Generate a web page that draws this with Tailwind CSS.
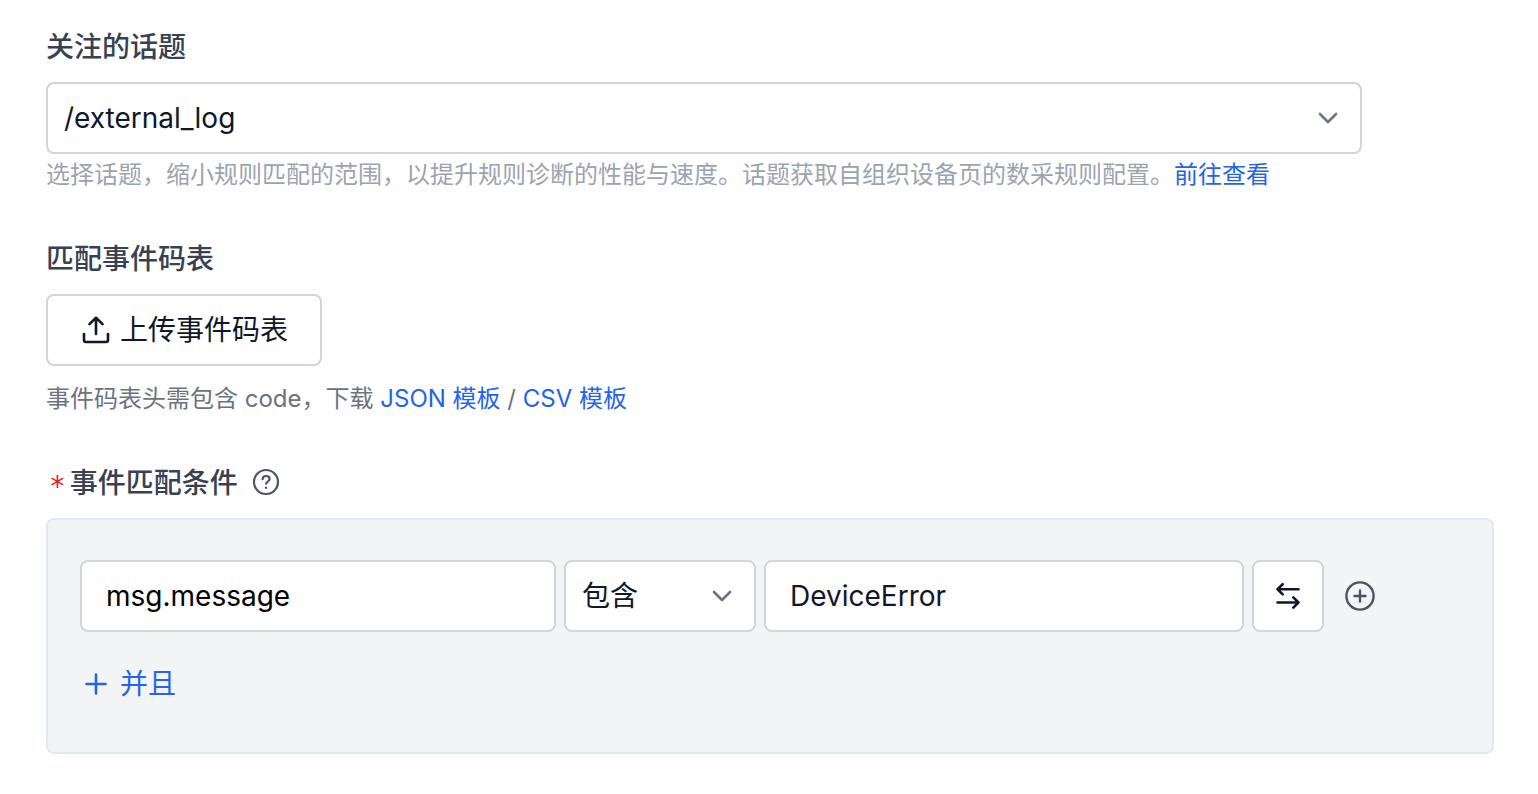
<!DOCTYPE html>
<html lang="zh-CN">
<head>
<meta charset="utf-8">
<meta name="viewport" content="width=device-width, initial-scale=1">
<title>规则配置</title>
<script src="https://cdn.jsdelivr.net/npm/@tailwindcss/browser@4"></script>
</head>
<body class="bg-white font-['Inter','Noto_Sans_CJK_SC',sans-serif] text-[28px] leading-10 text-[#0f172a]">
<form class="flex flex-col gap-12 pt-[27px] pr-11 pb-10 pl-[46px]">

  <section class="flex flex-col">
    <label for="topic" class="mb-[15px] font-medium text-[#374151]">关注的话题</label>
    <div class="mr-33 grid items-center">
      <select id="topic" class="col-start-1 row-start-1 h-18 w-full appearance-none rounded-lg border-2 border-[#d1d5db] bg-white pr-16 pl-4">
        <option>/external_log</option>
      </select>
      <svg class="pointer-events-none col-start-1 row-start-1 mr-[18px] size-8 justify-self-end" viewBox="0 0 32 32" fill="none" stroke="#6b7280" stroke-width="2.6" stroke-linecap="round" stroke-linejoin="round" aria-hidden="true"><path d="M8 12l8 8 8-8"/></svg>
    </div>
    <p class="mt-[5px] text-2xl leading-8 text-[#9ca3af]">选择话题，缩小规则匹配的范围，以提升规则诊断的性能与速度。话题获取自组织设备页的数采规则配置。<a href="#" class="text-[#2563eb]">前往查看</a></p>
  </section>

  <section class="flex flex-col items-start">
    <h2 class="mb-[15px] font-medium text-[#374151]">匹配事件码表</h2>
    <button type="button" class="flex h-18 items-center gap-2 rounded-lg border-2 border-[#d1d5db] bg-white px-8">
      <svg class="size-8" viewBox="0 0 32 32" fill="none" stroke="currentColor" stroke-width="2.6" stroke-linecap="round" stroke-linejoin="round" aria-hidden="true"><path d="M16 20V4M9.500 10.200L16 3.700l6.500 6.500M4 20v6a2 2 0 0 0 2 2h20a2 2 0 0 0 2-2v-6"/></svg>
      <span>上传事件码表</span>
    </button>
    <p class="mt-[17px] text-2xl leading-8 text-[#6b7280]">事件码表头需包含 code，下载 <a href="#" class="text-[#2563eb]">JSON 模板</a> / <a href="#" class="text-[#2563eb]">CSV 模板</a></p>
  </section>

  <section class="flex flex-col">
    <div class="mb-[15px] flex items-center pl-[3px] font-medium text-[#374151]">
      <span class="mr-1 pt-2 font-['DejaVu_Sans_Mono',monospace] leading-8 font-normal text-[#dc2626]">*</span>
      <h2 id="condition-title">事件匹配条件</h2>
      <button type="button" aria-label="帮助" class="ml-3 text-[#4b5563]">
        <svg class="size-8" viewBox="0 0 32 32" fill="none" stroke="currentColor" stroke-width="2.200" stroke-linecap="round" stroke-linejoin="round" aria-hidden="true"><circle cx="16" cy="15" r="12"/><path d="M12.600 12.200c0-1.900 1.500-3.200 3.500-3.200s3.500 1.300 3.500 3.100c0 2.400-3.500 2.500-3.500 4.600"/><circle cx="16" cy="20.800" r="1.200" fill="currentColor" stroke="none"/></svg>
      </button>
    </div>
    <div role="group" aria-labelledby="condition-title" class="flex flex-col items-start gap-8 rounded-lg border-2 border-[#e2e8f0] bg-[#f3f4f6] px-8 pt-10 pb-12">
      <div class="grid w-full grid-cols-[119fr_192px_120fr_72px_auto] items-center gap-2 pr-21">
        <input type="text" aria-label="字段" value="msg.message" class="h-18 w-full min-w-0 rounded-lg border-2 border-[#d1d5db] bg-white px-6 text-black">
        <div class="grid items-center">
          <select aria-label="匹配方式" class="col-start-1 row-start-1 h-18 w-full appearance-none rounded-lg border-2 border-[#d1d5db] bg-white pr-14 pl-4">
            <option>包含</option>
          </select>
          <svg class="pointer-events-none col-start-1 row-start-1 mr-[18px] size-8 justify-self-end" viewBox="0 0 32 32" fill="none" stroke="#6b7280" stroke-width="2.6" stroke-linecap="round" stroke-linejoin="round" aria-hidden="true"><path d="M8 12l8 8 8-8"/></svg>
        </div>
        <input type="text" aria-label="匹配值" value="DeviceError" class="h-18 w-full min-w-0 rounded-lg border-2 border-[#d1d5db] bg-white px-6">
        <button type="button" aria-label="切换" class="flex h-18 items-center justify-center rounded-lg border-2 border-[#d1d5db] bg-white">
          <svg class="size-8" viewBox="0 0 32 32" fill="none" stroke="currentColor" stroke-width="2.6" stroke-linecap="round" stroke-linejoin="round" aria-hidden="true"><path d="M26.500 9.300H5.500M10.700 4.200L5.500 9.300l5.200 5.100M5.500 22.500h21M21.300 17.400l5.200 5.100-5.200 5.100"/></svg>
        </button>
        <button type="button" aria-label="添加" class="ml-3 text-[#4b5563]">
          <svg class="size-8" viewBox="0 0 32 32" fill="none" stroke="currentColor" stroke-width="2.400" stroke-linecap="round" aria-hidden="true"><circle cx="16" cy="16" r="13.600"/><path d="M16 10.500v11M10.500 16h11"/></svg>
        </button>
      </div>
      <button type="button" class="flex items-center gap-2 text-[#2563eb]">
        <svg class="size-8" viewBox="0 0 32 32" fill="none" stroke="currentColor" stroke-width="2.600" stroke-linecap="round" aria-hidden="true"><path d="M16 6.500v19M6.500 16h19"/></svg>
        <span>并且</span>
      </button>
    </div>
  </section>

</form>
</body>
</html>
